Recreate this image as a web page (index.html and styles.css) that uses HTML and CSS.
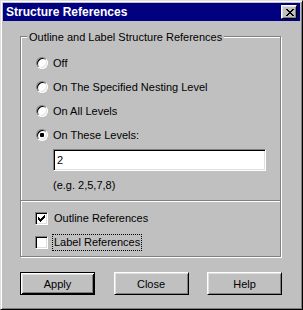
FILE: index.html
```html
<!DOCTYPE html>
<html>
<head>
<meta charset="utf-8">
<link rel="stylesheet" href="styles.css">
</head>
<body>
<div class="window">
  <div class="titlebar">
    <span class="title">Structure References</span>
    <span class="close">
      <svg width="8" height="7" viewBox="0 0 8 7" shape-rendering="crispEdges">
        <rect x="0" y="0" width="2" height="1"/><rect x="6" y="0" width="2" height="1"/>
        <rect x="1" y="1" width="2" height="1"/><rect x="5" y="1" width="2" height="1"/>
        <rect x="2" y="2" width="4" height="1"/>
        <rect x="3" y="3" width="2" height="1"/>
        <rect x="2" y="4" width="4" height="1"/>
        <rect x="1" y="5" width="2" height="1"/><rect x="5" y="5" width="2" height="1"/>
        <rect x="0" y="6" width="2" height="1"/><rect x="6" y="6" width="2" height="1"/>
      </svg>
    </span>
  </div>
  <div class="group">
    <div class="legend">Outline and Label Structure References</div>
    <div class="options">
      <div class="row"><span class="radio"></span><span class="lbl">Off</span></div>
      <div class="row"><span class="radio"></span><span class="lbl">On The Specified Nesting Level</span></div>
      <div class="row"><span class="radio"></span><span class="lbl">On All Levels</span></div>
      <div class="row"><span class="radio"><span class="dot"></span></span><span class="lbl">On These Levels:</span></div>
    </div>
    <div class="input">2</div>
    <div class="hint">(e.g. 2,5,7,8)</div>
    <div class="sep"></div>
    <div class="checks">
      <div class="row crow"><span class="check">
        <svg width="7" height="7" viewBox="0 0 7 7" shape-rendering="crispEdges">
          <rect x="6" y="0" width="1" height="1"/>
          <rect x="5" y="1" width="2" height="1"/>
          <rect x="0" y="2" width="1" height="1"/><rect x="4" y="2" width="3" height="1"/>
          <rect x="0" y="3" width="2" height="1"/><rect x="3" y="3" width="3" height="1"/>
          <rect x="0" y="4" width="5" height="1"/>
          <rect x="1" y="5" width="3" height="1"/>
          <rect x="2" y="6" width="1" height="1"/>
        </svg>
      </span><span class="lbl">Outline References</span></div>
      <div class="row crow"><span class="check"></span><span class="lbl focus">Label References</span></div>
    </div>
  </div>
  <div class="buttons">
    <button class="btn default">Apply</button>
    <button class="btn">Close</button>
    <button class="btn">Help</button>
  </div>
</div>
</body>
</html>
```

FILE: styles.css
```css
* { box-sizing: border-box; }
html, body { margin: 0; padding: 0; background: #c0c0c0; }
body {
  font-family: "Liberation Sans", Arial, sans-serif;
  font-size: 11px;
  color: #000;
}
.window {
  width: 303px;
  height: 310px;
  background: #c0c0c0;
  border: 1px solid;
  border-color: #dfdfdf #000 #000 #dfdfdf;
  box-shadow: inset 1px 1px #fff, inset -1px -1px #808080;
  padding: 2px;
}
.titlebar {
  height: 18px;
  background: #000080;
  display: flex;
  align-items: center;
  justify-content: space-between;
  padding: 0 3px 0 3px;
}
.title {
  color: #fff;
  font-weight: bold;
  font-size: 12px;
  line-height: 18px;
}
.close {
  width: 16px;
  height: 14px;
  background: #c0c0c0;
  border: 1px solid;
  border-color: #fff #000 #000 #fff;
  box-shadow: inset 1px 1px #dfdfdf, inset -1px -1px #808080;
  display: flex;
  align-items: center;
  justify-content: center;
  padding: 0 0 0 1px;
}
.close svg { display: block; }
.group {
  margin: 15px 0 0 17px;
  width: 261px;
  border: 1px solid #808080;
  box-shadow: inset 1px 1px #fff, 1px 1px #fff;
  padding-bottom: 2px;
}
.legend {
  width: fit-content;
  margin: -7px 0 0 6px;
  padding: 0 2px;
  line-height: 14px;
  background: #c0c0c0;
}
.options { margin-top: 7px; }
.row {
  height: 24px;
  display: flex;
  align-items: center;
  padding-left: 15px;
}
.radio {
  width: 12px;
  height: 12px;
  border-radius: 50%;
  background: #fff;
  border: 1px solid;
  border-color: #808080 #fff #fff #808080;
  box-shadow: inset 1px 1px #000, inset -1px -1px #dfdfdf;
  margin-right: 3px;
  display: flex;
  align-items: center;
  justify-content: center;
}
.dot {
  width: 4px;
  height: 4px;
  background: #000;
  border-radius: 1px;
}
.lbl {
  border: 1px solid transparent;
  padding: 0 1px;
  line-height: 15px;
}
.lbl.focus { border: 1px dotted #000; }
.input {
  margin: 2px 0 0 32px;
  width: 213px;
  height: 22px;
  background: #fff;
  border: 1px solid;
  border-color: #808080 #fff #fff #808080;
  box-shadow: inset 1px 1px #000, inset -1px -1px #dfdfdf;
  padding-left: 3px;
  line-height: 20px;
}
.hint {
  margin-top: 7px;
  padding-left: 32px;
  line-height: 14px;
}
.sep {
  margin-top: 8px;
  height: 2px;
  border-top: 1px solid #808080;
  border-bottom: 1px solid #fff;
}
.checks { margin-top: 4px; }
.crow { padding-left: 14px; }
.check {
  width: 13px;
  height: 13px;
  background: #fff;
  border: 1px solid;
  border-color: #808080 #fff #fff #808080;
  box-shadow: inset 1px 1px #000, inset -1px -1px #dfdfdf;
  margin-right: 4px;
  display: flex;
  align-items: center;
  justify-content: center;
}
.check svg { display: block; }
.buttons {
  margin: 15px 0 0 17px;
  width: 262px;
  display: flex;
  justify-content: space-between;
}
.btn {
  width: 75px;
  height: 23px;
  padding: 0;
  background: #c0c0c0;
  font-family: "Liberation Sans", Arial, sans-serif;
  font-size: 11px;
  color: #000;
  border: 1px solid;
  border-color: #fff #000 #000 #fff;
  box-shadow: inset 1px 1px #dfdfdf, inset -1px -1px #808080;
}
.btn.default {
  border: 1px solid #000;
  box-shadow: inset 1px 1px #fff, inset -1px -1px #000, inset 2px 2px #dfdfdf, inset -2px -2px #808080;
}
```
